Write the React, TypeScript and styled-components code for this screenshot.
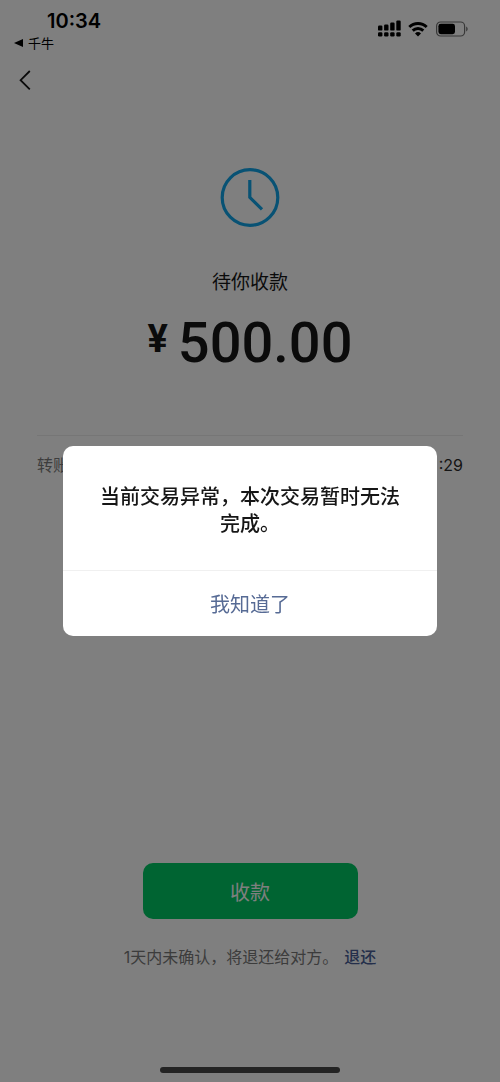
import React from "react";
import styled, { createGlobalStyle } from "styled-components";

const GlobalStyle = createGlobalStyle`
  * { box-sizing: border-box; }
  body {
    margin: 0;
    background: #ffffff;
    color: #161616;
    font-family: Inter, "Noto Sans CJK SC", sans-serif;
  }
  h1, p, dl, dt, dd { margin: 0; font-weight: 400; }
`;

const Screen = styled.div`
  min-height: 100vh;
  display: flex;
  flex-direction: column;
`;

const StatusBar = styled.header`
  display: flex;
  justify-content: space-between;
  align-items: flex-start;
  height: 56px;
  padding: 8px 32px 0 14px;
  color: #000000;
`;

const StatusLeft = styled.div`
  display: flex;
  flex-direction: column;
`;

const Clock = styled.time`
  padding-left: 33px;
  font-size: 20px;
  font-weight: 600;
  line-height: 26px;
`;

const ReturnLink = styled.a`
  display: flex;
  align-items: center;
  gap: 5px;
  font-size: 13px;
  line-height: 18px;
  color: inherit;
  text-decoration: none;
`;

const StatusIcons = styled.div`
  display: flex;
  align-items: center;
  gap: 7px;
  padding-top: 12px;
`;

const NavBar = styled.nav`
  display: flex;
  align-items: center;
  height: 48px;
  padding: 0 18px;
`;

const Button = styled.button`
  border: 0;
  padding: 0;
  background: none;
  font-family: inherit;
  font-size: 20px;
  font-weight: 400;
  cursor: pointer;
`;

const BackButton = styled(Button)`
  display: flex;
  color: #161616;
`;

const Main = styled.main`
  flex: 1;
  display: flex;
  flex-direction: column;
  align-items: center;
  padding: 63px 37px 0;
`;

const StatusText = styled.h1`
  margin-top: 42px;
  font-size: 19px;
  line-height: 28px;
`;

const Amount = styled.p`
  display: flex;
  align-items: flex-start;
  gap: 10px;
  margin-top: 16px;
  font-family: Roboto, sans-serif;
  font-size: 56px;
  font-weight: 500;
  line-height: 60px;
`;

const Currency = styled.span`
  font-size: 38px;
  font-weight: 700;
  line-height: 52px;
`;

const Details = styled.dl`
  align-self: stretch;
  display: flex;
  justify-content: space-between;
  margin-top: 62px;
  padding-top: 16px;
  border-top: 1px solid #ececec;
  font-size: 16px;
  line-height: 26px;
`;

const DetailLabel = styled.dt`
  color: #7a7a7a;
`;

const DetailValue = styled.dd`
  color: #2b2b2b;
`;

const Footer = styled.footer`
  display: flex;
  flex-direction: column;
  align-items: center;
`;

const ReceiveButton = styled(Button)`
  width: 43%;
  height: 56px;
  border-radius: 10px;
  background: #00c864;
  color: #ffffff;
`;

const Note = styled.p`
  display: flex;
  gap: 6px;
  margin-top: 26px;
  font-size: 16px;
  line-height: 24px;
  color: #787878;
`;

const RefundLink = styled.a`
  color: #4a5f96;
  font-weight: 500;
  text-decoration: none;
`;

const HomeIndicator = styled.div`
  width: 36%;
  height: 6px;
  margin: 98px 0 9px;
  border-radius: 3px;
  background: #484848;
`;

const Backdrop = styled.div`
  position: fixed;
  inset: 0;
  display: flex;
  align-items: center;
  justify-content: center;
  padding: 0 63px;
  background: rgba(0, 0, 0, 0.5);
`;

const Dialog = styled.section`
  width: 100%;
  border-radius: 10px;
  background: #ffffff;
  overflow: hidden;
`;

const DialogMessage = styled.p`
  padding: 38px 32px 32px;
  font-size: 20px;
  font-weight: 500;
  line-height: 27px;
  text-align: center;
`;

const DialogButton = styled(Button)`
  display: block;
  width: 100%;
  height: 66px;
  border-top: 1px solid #f0f0f0;
  color: #576b95;
`;

const barHeights = [5, 6, 8, 10];

function SignalIcon() {
  return (
    <svg width="24" height="17" viewBox="0 0 24 17" fill="currentColor" aria-hidden="true">
      {barHeights.map((h, i) => (
        <g key={h}>
          <rect x={1 + i * 6.1} y={10.6 - h} width="4.4" height={h} rx="1.2" />
          <rect x={1 + i * 6.1} y="12.2" width="4.4" height="4.2" rx="1.2" />
        </g>
      ))}
    </svg>
  );
}

function WifiIcon() {
  return (
    <svg width="20" height="16" viewBox="0 0 20 16" aria-hidden="true">
      <g fill="none" stroke="currentColor" strokeWidth="2.9">
        <path d="M1.3 6a12.4 12.4 0 0 1 17.4 0" />
        <path d="M4.7 9.6a7.6 7.6 0 0 1 10.6 0" />
      </g>
      <path d="M10 15.4 7 12.4a4.4 4.4 0 0 1 6 0z" fill="currentColor" />
    </svg>
  );
}

function BatteryIcon() {
  return (
    <svg width="33" height="16" viewBox="0 0 33 16" aria-hidden="true">
      <rect x="1.6" y="1" width="28" height="14" rx="4" fill="none" stroke="#707070" strokeWidth="1.2" />
      <rect x="3.4" y="2.8" width="16.6" height="10.4" rx="2.4" fill="currentColor" />
      <path d="M31.2 5.6c1.9.8 1.9 4 0 4.8z" fill="#707070" />
    </svg>
  );
}

export default function App() {
  return (
    <>
      <GlobalStyle />
      <Screen>
        <StatusBar>
          <StatusLeft>
            <Clock>10:34</Clock>
            <ReturnLink href="#">
              <svg width="9" height="8" viewBox="0 0 9 8" aria-hidden="true">
                <path d="M0 4 9 0v8z" fill="currentColor" />
              </svg>
              千牛
            </ReturnLink>
          </StatusLeft>
          <StatusIcons>
            <SignalIcon />
            <WifiIcon />
            <BatteryIcon />
          </StatusIcons>
        </StatusBar>
        <NavBar>
          <BackButton type="button" aria-label="返回">
            <svg width="14" height="22" viewBox="0 0 14 22" fill="none" stroke="currentColor" strokeWidth="1.8" aria-hidden="true">
              <path d="M11.8 2 2.6 11.2l9.2 9.2" />
            </svg>
          </BackButton>
        </NavBar>
        <Main>
          <svg width="60" height="60" viewBox="0 0 60 60" fill="none" stroke="#10a4e8" strokeWidth="3.2" aria-hidden="true">
            <circle cx="30" cy="30.5" r="27.8" />
            <path d="M29.8 13v17.4l12.2 12" />
          </svg>
          <StatusText>待你收款</StatusText>
          <Amount>
            <Currency>¥</Currency>
            <span>500.00</span>
          </Amount>
          <Details>
            <DetailLabel>转账</DetailLabel>
            <DetailValue>:29</DetailValue>
          </Details>
        </Main>
        <Footer>
          <ReceiveButton type="button">收款</ReceiveButton>
          <Note>
            <span>1天内未确认，将退还给对方。</span>
            <RefundLink href="#">退还</RefundLink>
          </Note>
          <HomeIndicator />
        </Footer>
      </Screen>
      <Backdrop>
        <Dialog role="alertdialog" aria-modal="true" aria-labelledby="dialog-message">
          <DialogMessage id="dialog-message">当前交易异常，本次交易暂时无法完成。</DialogMessage>
          <DialogButton type="button">我知道了</DialogButton>
        </Dialog>
      </Backdrop>
    </>
  );
}
